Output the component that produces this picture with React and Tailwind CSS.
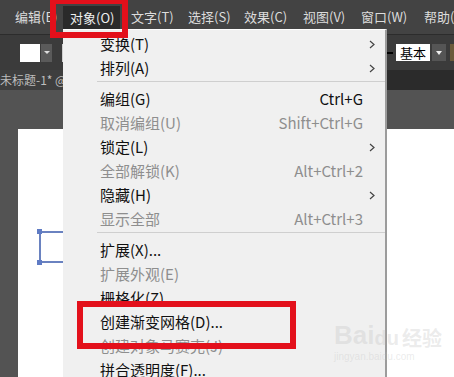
import React from "react";

const F = { fontFamily: '"Noto Sans CJK SC", "Noto Sans", sans-serif' };

function Item({ label, shortcut, disabled, sub }) {
  return (
    <div className={`relative flex items-center h-[24px] pl-[37px] pr-[22px] ${disabled ? "text-[#8e8e8e]" : "text-[#111]"}`}>
      <span className="flex-1 whitespace-nowrap">{label}</span>
      {shortcut && <span className="whitespace-nowrap">{shortcut}</span>}
      {sub && (
        <svg className="absolute right-[10px] top-[8px]" width="6" height="9" viewBox="0 0 6 9">
          <path d="M1 1 L5 4.5 L1 8" fill="none" stroke="#444" strokeWidth="1.2" />
        </svg>
      )}
    </div>
  );
}

function Sep() {
  return (
    <div className="h-[7px] flex items-start pl-[34px] pt-[1px]">
      <div className="h-px w-full bg-[#cfcfcf]" />
    </div>
  );
}

export default function App() {
  const menus = [
    ["编辑(E)", 55],
    ["对象(O)", 61],
    ["文字(T)", 57],
    ["选择(S)", 56],
    ["效果(C)", 59],
    ["视图(V)", 58],
    ["窗口(W)", 63],
    ["帮助(H)", 60],
  ];
  return (
    <div className="relative w-[454px] h-[377px] overflow-hidden bg-[#535353] flex flex-col" style={F}>
      {/* menu bar */}
      <div className="h-[34px] bg-[#434343] flex items-center text-[13px] text-[#dcdcdc] pl-[15px] shrink-0 overflow-hidden">
        {menus.map(([t, w], i) => (
          <span key={i} className="whitespace-nowrap shrink-0" style={{ width: w }}>{t}</span>
        ))}
      </div>
      {/* toolbar */}
      <div className="h-[36px] bg-[#3b3b3b] border-t border-[#2c2c2c] flex items-center shrink-0 pl-[20px]">
        <div className="w-[20px] h-[18px] bg-white" />
        <div className="ml-[1px] w-[11px] h-[18px] bg-[#5a5a5a] flex items-center justify-center">
          <div className="w-0 h-0 border-l-[3px] border-r-[3px] border-t-[3px] border-l-transparent border-r-transparent border-t-[#ddd]" />
        </div>
        <div className="ml-[10px] w-[4px] h-[18px] bg-[#cfcfcf]" />
        <div className="flex-1" />
        <div className="w-[7px] h-[2px] bg-black mr-[3px]" />
        <div className="w-[34px] h-[17px] bg-white text-black text-[13px] leading-[17px] flex items-center justify-center">基本</div>
        <div className="ml-[2px] w-[14px] h-[17px] bg-[#555] flex items-center justify-center">
          <div className="w-0 h-0 border-l-[3px] border-r-[3px] border-t-[4px] border-l-transparent border-r-transparent border-t-[#eee]" />
        </div>
        <div className="ml-[4px] w-[4px] h-[17px] bg-[#6b5a3a]" />
      </div>
      {/* tab bar */}
      <div className="h-[20px] bg-[#2b2b2b] flex shrink-0">
        <div className="w-[63px] bg-[#3e3e3e] text-[#bdbdbd] text-[12px] leading-[20px] whitespace-nowrap">未标题-1* @</div>
      </div>
      {/* canvas */}
      <div className="flex-1 pt-[39px] pl-[18px] flex flex-col">
        <div className="flex-1 bg-white relative">
          <div className="absolute left-[21px] top-[102px] w-[40px] h-[32px] border-l-2 border-t-2 border-b-2 border-[#6a82c0]" />
          <div className="absolute left-[19px] top-[100px] w-[5px] h-[5px] bg-[#5f7bc4]" />
          <div className="absolute left-[19px] top-[131px] w-[5px] h-[5px] bg-[#5f7bc4]" />
        </div>
      </div>

      {/* highlighted top item */}
      <div className="absolute left-[63px] top-[6px] w-[57px] h-[23px] bg-[#2a2a2a] text-[13px] text-[#eee] flex items-center pl-[7px]">对象(O)</div>

      {/* dropdown menu */}
      <div className="absolute left-[63px] top-[29px] w-[324px] h-[360px] bg-[#f0f0f0] border-r-2 border-[#9c9c9c] text-[15px] pt-[2px] border-t border-t-white">
        <Item label="变换(T)" sub />
        <Item label="排列(A)" sub />
        <Sep />
        <Item label="编组(G)" shortcut="Ctrl+G" />
        <Item label="取消编组(U)" shortcut="Shift+Ctrl+G" disabled />
        <Item label="锁定(L)" sub />
        <Item label="全部解锁(K)" shortcut="Alt+Ctrl+2" disabled />
        <Item label="隐藏(H)" sub />
        <Item label="显示全部" shortcut="Alt+Ctrl+3" disabled />
        <Sep />
        <Item label="扩展(X)..." />
        <Item label="扩展外观(E)" disabled />
        <Item label="栅格化(Z)..." />
        <Item label="创建渐变网格(D)..." />
        <Item label="创建对象马赛克(J)" disabled />
        <Item label="拼合透明度(F)..." />
      </div>

      {/* red annotation boxes */}
      <div className="absolute left-[50px] top-[-2px] w-[78px] h-[40px] border-[6px] border-[#e3101b]" />
      <div className="absolute left-[77px] top-[301px] w-[219px] h-[48px] border-[6px] border-[#e3101b]" />

      {/* watermark */}
      <div className="absolute left-[334px] top-[322px] flex flex-col items-start pointer-events-none">
        <div className="flex items-end leading-none text-[26px] font-bold text-[rgba(190,190,190,0.3)]" style={{ fontFamily: '"Liberation Sans", sans-serif' }}>
          <span>Bai</span><span className="text-[20px]">du</span><span className="text-[20px] ml-[3px]" style={F}>经验</span>
        </div>
        <div className="text-[10px] text-[rgba(190,190,190,0.3)] leading-none mt-[4px]" style={{ fontFamily: '"Liberation Sans", sans-serif' }}>jingyan.baidu.com</div>
      </div>
    </div>
  );
}
